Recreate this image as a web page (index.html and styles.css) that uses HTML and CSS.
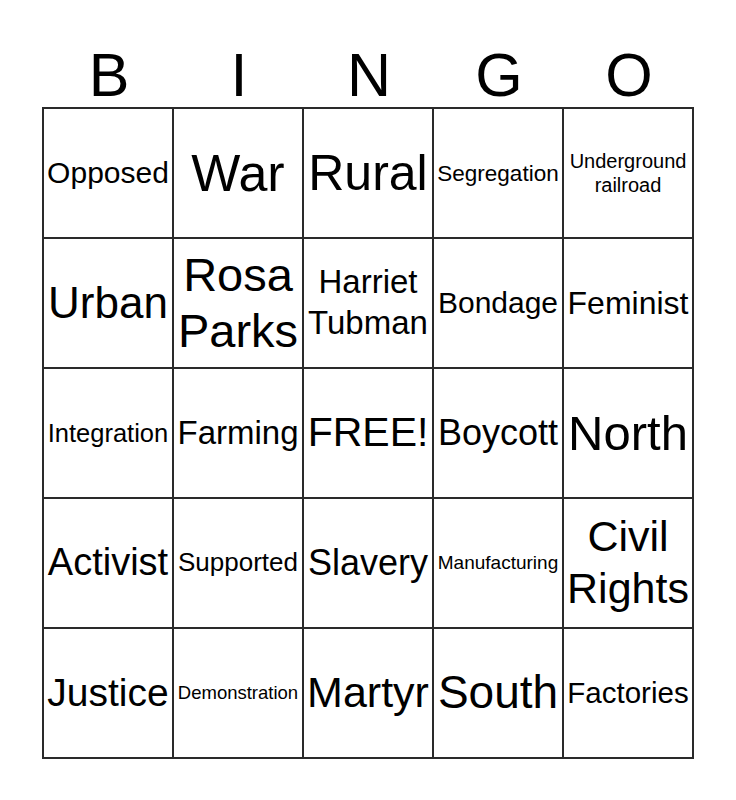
FILE: index.html
```html
<!DOCTYPE html>
<html>
<head>
<meta charset="utf-8">
<link rel="stylesheet" href="styles.css">
</head>
<body>
<div class="card">
  <div class="head">
    <span>B</span><span>I</span><span>N</span><span>G</span><span>O</span>
  </div>
  <div class="grid">
    <div class="cell f30">Opposed</div>
    <div class="cell f52">War</div>
    <div class="cell f50">Rural</div>
    <div class="cell f22">Segregation</div>
    <div class="cell f20">Underground<br>railroad</div>

    <div class="cell f44">Urban</div>
    <div class="cell f47">Rosa<br>Parks</div>
    <div class="cell f33 lh">Harriet<br>Tubman</div>
    <div class="cell f30">Bondage</div>
    <div class="cell f32">Feminist</div>

    <div class="cell f25">Integration</div>
    <div class="cell f33">Farming</div>
    <div class="cell f41">FREE!</div>
    <div class="cell f36">Boycott</div>
    <div class="cell f49">North</div>

    <div class="cell f38">Activist</div>
    <div class="cell f26">Supported</div>
    <div class="cell f36">Slavery</div>
    <div class="cell f19">Manufacturing</div>
    <div class="cell f43">Civil<br>Rights</div>

    <div class="cell f39">Justice</div>
    <div class="cell f18">Demonstration</div>
    <div class="cell f43">Martyr</div>
    <div class="cell f46">South</div>
    <div class="cell f29">Factories</div>
  </div>
</div>
</body>
</html>
```

FILE: styles.css
```css
html, body {
  margin: 0;
  padding: 0;
  background: #ffffff;
}
body {
  font-family: "Liberation Sans", Arial, sans-serif;
  color: #000000;
  width: 736px;
  height: 800px;
}
.card {
  padding-top: 45px;
  margin-left: 42px;
  width: 652px;
}
.head {
  display: grid;
  grid-template-columns: repeat(5, 130px);
  padding-left: 2px;
  height: 62px;
  line-height: 60px;
  font-size: 61px;
  text-align: center;
}
.grid {
  display: grid;
  grid-template-columns: repeat(5, 130px);
  grid-auto-rows: 130px;
  border-left: 2px solid #2a2a2a;
  border-top: 2px solid #2a2a2a;
  width: 650px;
}
.cell {
  box-sizing: border-box;
  border-right: 2px solid #2a2a2a;
  border-bottom: 2px solid #2a2a2a;
  display: flex;
  align-items: center;
  justify-content: center;
  text-align: center;
  line-height: 1.2;
  white-space: nowrap;
  overflow: hidden;
}
.lh { line-height: 1.24; }
.f52 { font-size: 52px; }
.f50 { font-size: 50px; }
.f49 { font-size: 49px; }
.f47 { font-size: 47px; }
.f46 { font-size: 46px; }
.f44 { font-size: 44px; }
.f43 { font-size: 43px; }
.f41 { font-size: 41px; }
.f39 { font-size: 39px; }
.f38 { font-size: 38px; }
.f36 { font-size: 36px; }
.f33 { font-size: 33px; }
.f32 { font-size: 32px; }
.f30 { font-size: 30px; }
.f29 { font-size: 29.5px; }
.f26 { font-size: 26px; }
.f25 { font-size: 25.5px; }
.f22 { font-size: 22.5px; }
.f20 { font-size: 20px; }
.f19 { font-size: 19px; }
.f18 { font-size: 18.5px; }
```
